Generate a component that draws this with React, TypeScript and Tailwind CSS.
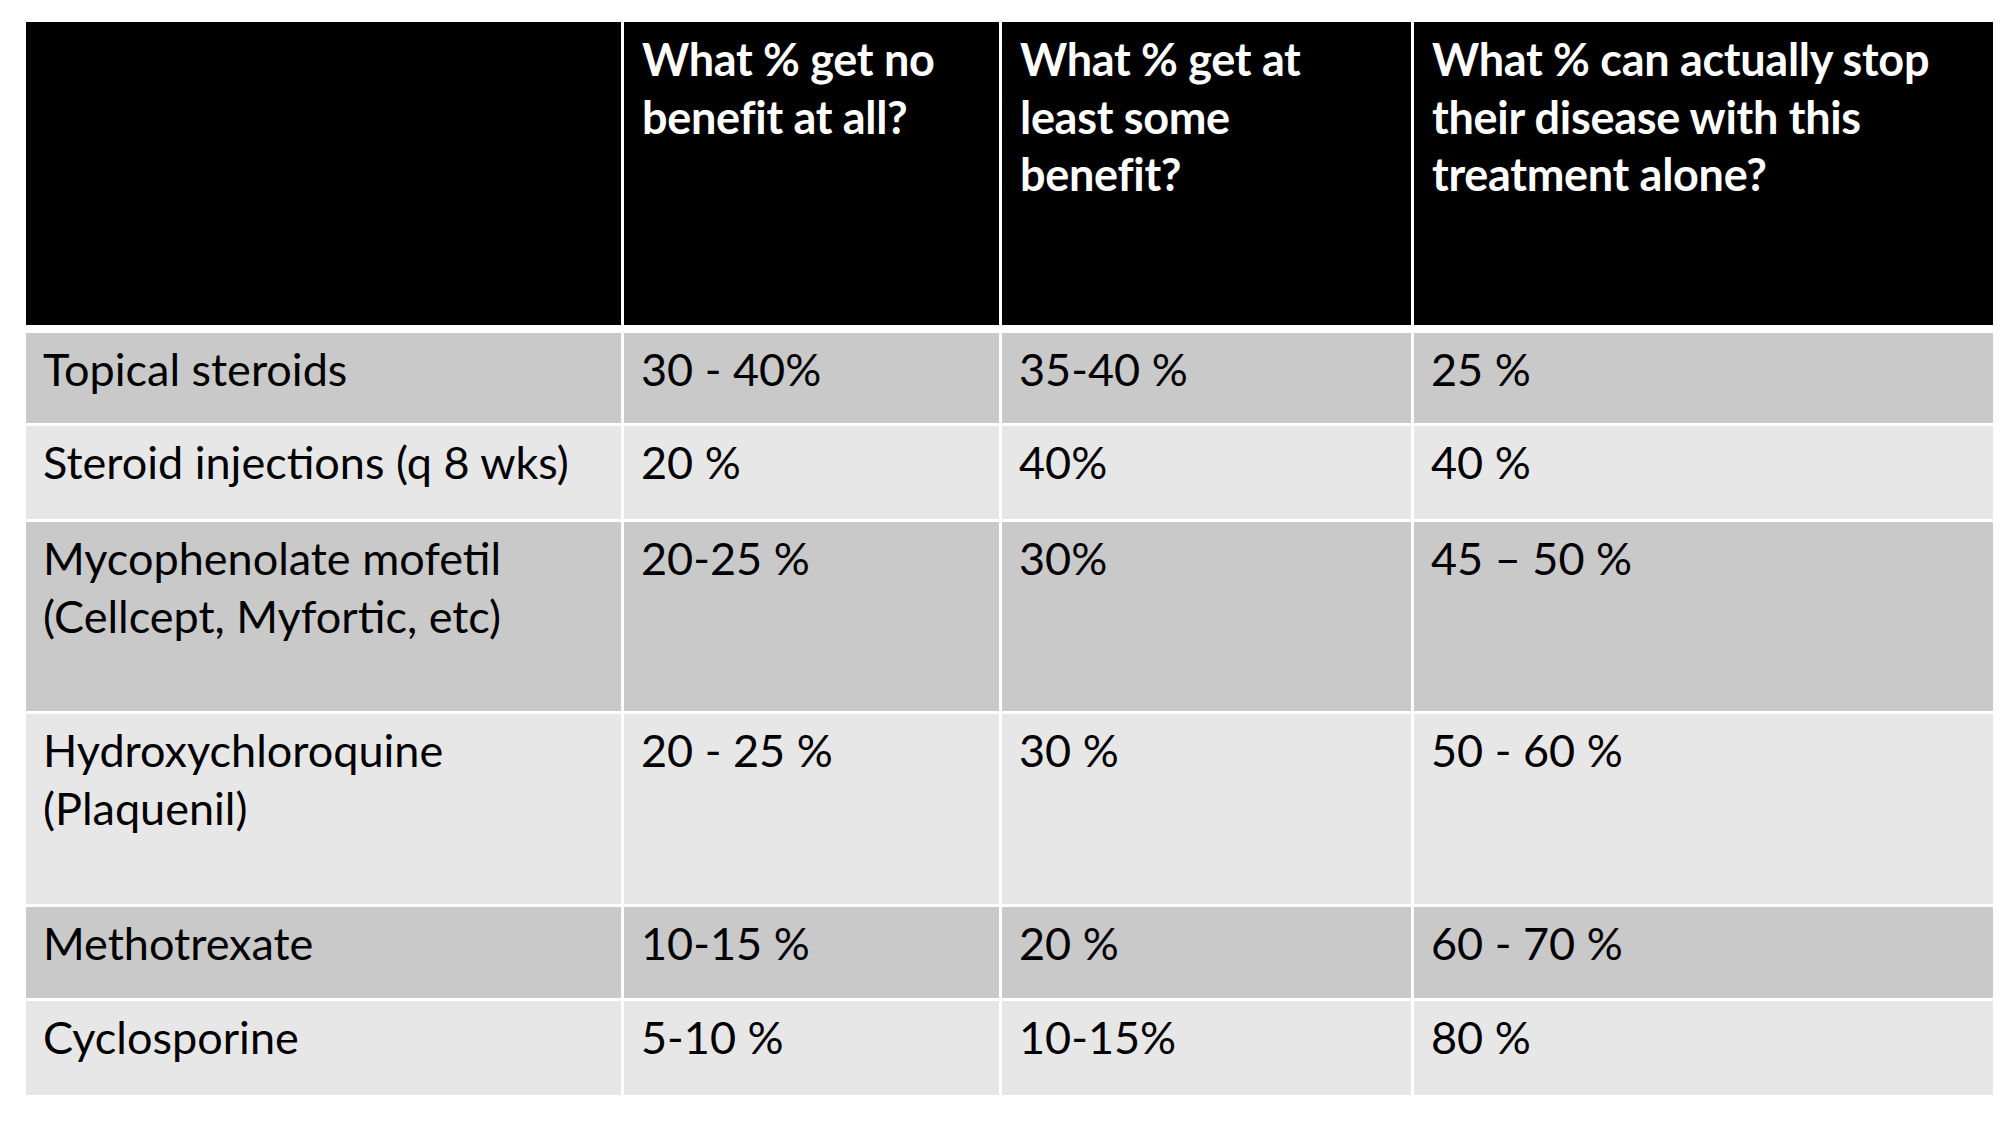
const cols = 'grid grid-cols-[595px_375px_409px_579px] gap-x-[3px]';

const headers: string[][] = [
    [],
    ['What % get no', 'benefit at all?'],
    ['What % get at', 'least some', 'benefit?'],
    ['What % can actually stop', 'their disease with this', 'treatment alone?'],
];

const rows: { cells: string[][]; height: string; shade: string }[] = [
    { cells: [['Topical steroids'], ['30 - 40%'], ['35-40 %'], ['25 %']], height: 'h-[90px]', shade: 'bg-[#c9c9c9]' },
    { cells: [['Steroid injections (q 8 wks)'], ['20 %'], ['40%'], ['40 %']], height: 'h-[93px]', shade: 'bg-[#e7e7e7]' },
    {
        cells: [['Mycophenolate mofetil', '(Cellcept, Myfortic, etc)'], ['20-25 %'], ['30%'], ['45 \u2013 50 %']],
        height: 'h-[189px]',
        shade: 'bg-[#c9c9c9]',
    },
    {
        cells: [['Hydroxychloroquine', '(Plaquenil)'], ['20 - 25 %'], ['30 %'], ['50 - 60 %']],
        height: 'h-[190px]',
        shade: 'bg-[#e7e7e7]',
    },
    { cells: [['Methotrexate'], ['10-15 %'], ['20 %'], ['60 - 70 %']], height: 'h-[91px]', shade: 'bg-[#c9c9c9]' },
    { cells: [['Cyclosporine'], ['5-10 %'], ['10-15%'], ['80 %']], height: 'h-[94px]', shade: 'bg-[#e7e7e7]' },
];

function Lines({ lines }: { lines: string[] }) {
    return (
        <>
            {lines.map((line) => (
                <div key={line} className="whitespace-nowrap">
                    {line}
                </div>
            ))}
        </>
    );
}

export default function App() {
    return (
        <div className="w-[2012px] h-[1122px] bg-white pt-[22px] pl-[26px] font-['Lato',sans-serif] text-[45px] leading-[57.6px]">
            <div className="flex flex-col w-[1967px]">
                <div className={`${cols} h-[303px] mb-[8px]`}>
                    {headers.map((lines, i) => (
                        <div key={i} className="bg-black text-white font-bold tracking-[-0.3px] pl-[18px] pt-[9px]">
                            <Lines lines={lines} />
                        </div>
                    ))}
                </div>
                <div className="flex flex-col gap-y-[3px]">
                    {rows.map((row) => (
                        <div key={row.cells[0][0]} className={`${cols} ${row.height}`}>
                            {row.cells.map((lines, i) => (
                                <div key={i} className={`${row.shade} text-black pl-[17px] pt-[8px]`}>
                                    <Lines lines={lines} />
                                </div>
                            ))}
                        </div>
                    ))}
                </div>
            </div>
        </div>
    );
}
